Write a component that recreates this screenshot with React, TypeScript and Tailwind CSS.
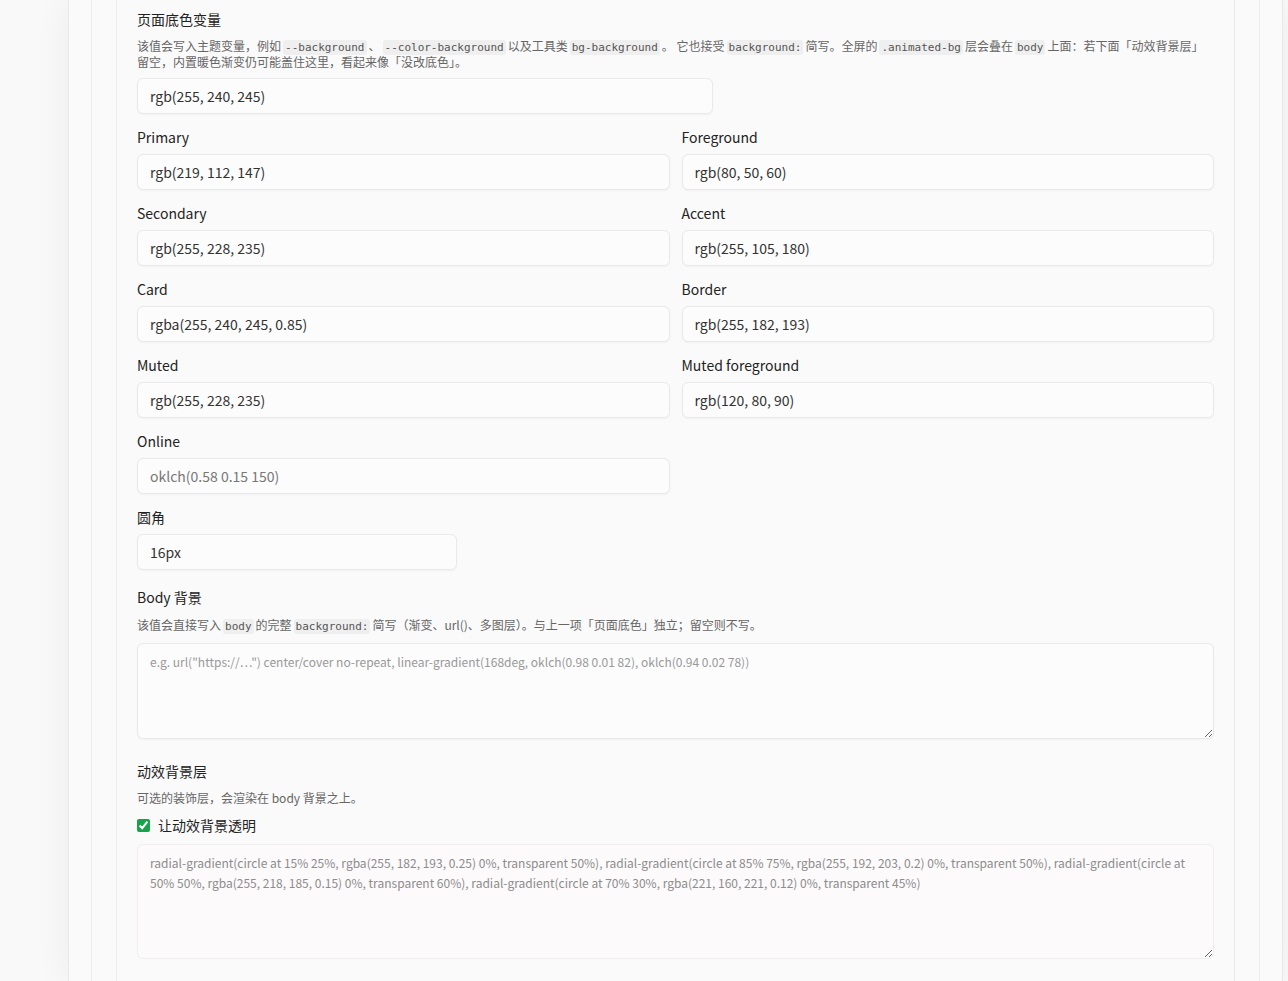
import React from 'react';

const sans = "font-['Noto_Sans_CJK_SC','Noto_Sans',sans-serif]";

function Code({ children }: { children: React.ReactNode }) {
  return (
    <code className="mx-[2px] rounded-[3px] bg-[#efefef] px-[2px] py-[1px] font-['DejaVu_Sans_Mono',monospace] text-[11px] leading-none text-[#555]">
      {children}
    </code>
  );
}

type Field = { label: string; value?: string; placeholder?: string };

const colorFields: Field[] = [
  { label: 'Primary', value: 'rgb(219, 112, 147)' },
  { label: 'Foreground', value: 'rgb(80, 50, 60)' },
  { label: 'Secondary', value: 'rgb(255, 228, 235)' },
  { label: 'Accent', value: 'rgb(255, 105, 180)' },
  { label: 'Card', value: 'rgba(255, 240, 245, 0.85)' },
  { label: 'Border', value: 'rgb(255, 182, 193)' },
  { label: 'Muted', value: 'rgb(255, 228, 235)' },
  { label: 'Muted foreground', value: 'rgb(120, 80, 90)' },
  { label: 'Online', placeholder: 'oklch(0.58 0.15 150)' },
];

const inputCls =
  'block h-9 rounded-md border border-[#e9e9e9] bg-[#fcfcfc] px-3 text-[14px] text-[#333] shadow-[0_1px_2px_rgba(0,0,0,0.04)] outline-none placeholder:text-[#777]';

function Label({ children }: { children: React.ReactNode }) {
  return <div className="mb-2 pt-px text-[14px] leading-5 text-[#222]">{children}</div>;
}

const animatedBg =
  'radial-gradient(circle at 15% 25%, rgba(255, 182, 193, 0.25) 0%, transparent 50%), radial-gradient(circle at 85% 75%, rgba(255, 192, 203, 0.2) 0%, transparent 50%), radial-gradient(circle at 50% 50%, rgba(255, 218, 185, 0.15) 0%, transparent 60%), radial-gradient(circle at 70% 30%, rgba(221, 160, 221, 0.12) 0%, transparent 45%)';

export default function App() {
  return (
    <div className={`${sans} h-[981px] overflow-hidden bg-[#f9f9f9]`}>
      <div className="ml-[68px] w-[1215px] h-full border-x border-[#e8e8e8] bg-[#fafafa] px-[22px] shadow-[0_0_36px_rgba(0,0,0,0.06)]">
        <div className="h-full border-x border-[#ececec] px-6">
          <div className="h-full border-x border-[#ececec] px-5 pt-[9px]">
            {/* page background variable */}
            <div className="text-[14px] leading-5 text-[#222]">页面底色变量</div>
            <p className="mt-[9px] text-[12px] leading-4 text-[#666]">
              该值会写入主题变量，例如<Code>--background</Code>、<Code>--color-background</Code>以及工具类
              <Code>bg-background</Code>。 它也接受<Code>background:</Code>简写。全屏的<Code>.animated-bg</Code>
              层会叠在<Code>body</Code>上面：若下面「动效背景层」留空，内置暖色渐变仍可能盖住这里，看起来像「没改底色」。
            </p>
            <input className={`${inputCls} mt-2 w-[576px]`} defaultValue="rgb(255, 240, 245)" />

            {/* theme colours */}
            <div className="mt-3 grid grid-cols-2 gap-x-3 gap-y-3">
              {colorFields.map((f) => (
                <div key={f.label}>
                  <Label>{f.label}</Label>
                  <input className={`${inputCls} -mt-px w-full`} defaultValue={f.value} placeholder={f.placeholder} />
                </div>
              ))}
            </div>

            <div className="mt-3">
              <Label>圆角</Label>
              <input className={`${inputCls} -mt-px w-[320px]`} defaultValue="16px" />
            </div>

            {/* body background */}
            <div className="mt-[17px] text-[14px] leading-5 text-[#222]">Body 背景</div>
            <p className="mt-[10px] text-[12px] leading-4 text-[#666]">
              该值会直接写入<Code>body</Code>的完整<Code>background:</Code>简写（渐变、url()、多图层）。与上一项「页面底色」独立；留空则不写。
            </p>
            <textarea
              className="mt-[10px] block h-24 w-full resize-y rounded-md border border-[#e9e9e9] bg-[#fcfcfc] px-3 pt-2 text-[12px] leading-5 text-[#333] shadow-[0_1px_2px_rgba(0,0,0,0.04)] outline-none placeholder:text-[#999]"
              placeholder={'e.g. url("https://…") center/cover no-repeat, linear-gradient(168deg, oklch(0.98 0.01 82), oklch(0.94 0.02 78))'}
            />

            {/* animated layer */}
            <div className="mt-[22px] text-[14px] leading-5 text-[#222]">动效背景层</div>
            <p className="mt-[9px] text-[12px] leading-4 text-[#666]">可选的装饰层，会渲染在 body 背景之上。</p>
            <label className="mt-[9px] flex h-5 items-center gap-2 text-[14px] text-[#222]">
              <input type="checkbox" defaultChecked className="m-0 h-[13px] w-[13px] accent-[#16a34a]" />
              让动效背景透明
            </label>
            <textarea
              disabled
              className="mt-[9px] block h-[115px] w-full resize-y rounded-md border border-[#efefef] bg-[#fcfafb] px-3 pt-2 text-[12px] leading-5 text-[#8c8c8c] outline-none"
              defaultValue={animatedBg}
            />
          </div>
        </div>
      </div>
    </div>
  );
}
